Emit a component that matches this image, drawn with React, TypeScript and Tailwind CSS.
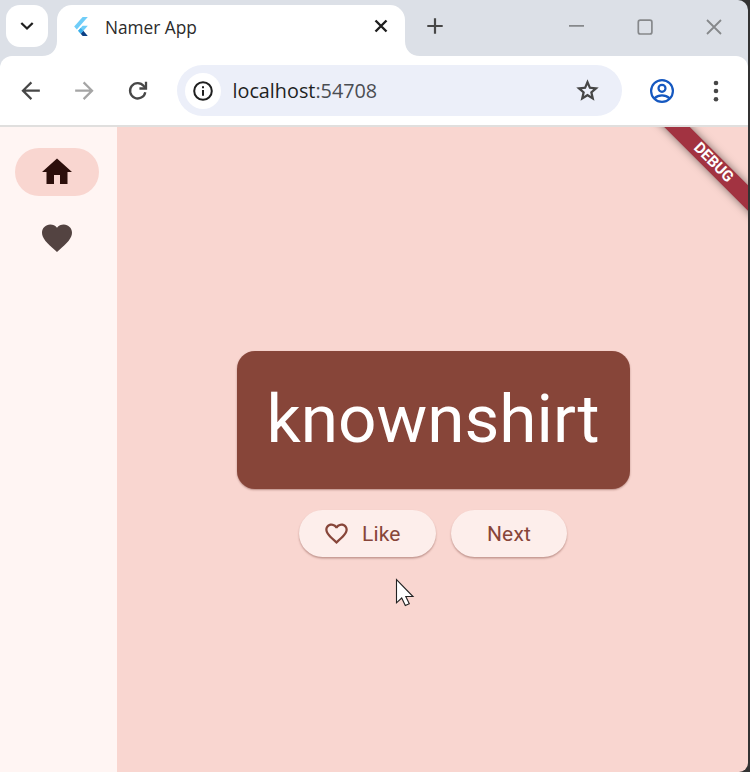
import type { ReactNode } from "react";

const SEGOE = "font-['Open_Sans','Noto_Sans',sans-serif]";

function Icon({ size, className = "", children }: { size: number; className?: string; children: ReactNode }) {
  return (
    <svg width={size} height={size} viewBox="0 0 24 24" fill="currentColor" className={`block shrink-0 ${className}`}>
      {children}
    </svg>
  );
}

function FlutterLogo() {
  return (
    <svg width="14" height="19" viewBox="2 0 20 24" preserveAspectRatio="none" className="block shrink-0">
      <path d="M14.3 0 2.3 12 6 15.7 21.7 0z" fill="#6fcdf8" />
      <path d="M14.3 11.1 7.9 17.5l3.7 3.7 10.1-10.1z" fill="#6fcdf8" />
      <path d="M11.6 21.2 14.3 24h7.4l-6.4-6.5z" fill="#0b3f84" />
      <path d="m7.9 17.5 3.7-3.7 3.7 3.7-3.7 3.7z" fill="#3aaeea" />
    </svg>
  );
}

function TabStrip() {
  return (
    <div className="flex h-[56px] items-start bg-[#dce0e7]">
      <div className="ml-[6px] mt-[5px] flex h-[42px] w-[42px] items-center justify-center rounded-[14px] bg-white">
        <svg width="14" height="10" viewBox="0 0 14 10" className="block" fill="none" stroke="#1f1f1f" strokeWidth="2.3">
          <path d="M1.3 2 7 7.5 12.7 2" />
        </svg>
      </div>
      <svg width="15" height="15" viewBox="0 0 15 15" className="-ml-[6px] mt-[41px] block shrink-0">
        <path d="M15 0v15H0C9 15 15 9 15 0z" fill="#fff" />
      </svg>
      <div className="mt-[5px] flex h-[51px] w-[348px] shrink-0 items-start rounded-t-[15px] bg-white">
        <div className="ml-[17px] mt-[12px]">
          <FlutterLogo />
        </div>
        <span className={`${SEGOE} ml-[17px] mt-[10px] w-[120px] whitespace-nowrap text-[17.3px] leading-[26px] text-[#2b2b2b]`}>
          Namer App
        </span>
        <svg width="14" height="14" viewBox="0 0 14 14" className="ml-auto mr-[17px] mt-[14px] block" stroke="#1f1f1f" strokeWidth="2.4">
          <path d="m1.5 1.5 11 11m0-11-11 11" />
        </svg>
      </div>
      <svg width="15" height="15" viewBox="0 0 15 15" className="mt-[41px] block shrink-0">
        <path d="M0 0v15h15C6 15 0 9 0 0z" fill="#fff" />
      </svg>
      <svg width="16" height="16" viewBox="0 0 16 16" className="ml-[7px] mt-[18px] block" stroke="#474747" strokeWidth="2.2">
        <path d="M8 .3v15.4M.3 8h15.4" />
      </svg>
      <div className="ml-auto mr-[26px] mt-[19px] flex text-[#86888b]">
        <svg width="16" height="16" viewBox="0 0 16 16" className="mr-[52px] block" stroke="currentColor" strokeWidth="1.8">
          <path d="M0 6.8h15" />
        </svg>
        <svg width="16" height="16" viewBox="0 0 16 16" className="mr-[53px] block" stroke="currentColor" strokeWidth="1.7" fill="none">
          <rect x="1.3" y="1.2" width="13.6" height="13.8" rx="2" />
        </svg>
        <svg width="16" height="16" viewBox="0 0 16 16" className="block" stroke="currentColor" strokeWidth="1.8">
          <path d="m1 1 14 14M15 1 1 15" />
        </svg>
      </div>
    </div>
  );
}

function Toolbar() {
  return (
    <div className="bg-[#dce0e7]">
      <div className="flex h-[69px] items-center rounded-t-[12px] bg-white">
        <Icon size={27} className="ml-[16.5px] text-[#474747]">
          <path d="M20.2 11H7.6l5.8-5.7L12 3.8 3.8 12l8.2 8.2 1.4-1.5L7.6 13h12.6z" transform="translate(.1 .2)" />
        </Icon>
        <Icon size={27} className="ml-[27px] text-[#a5a5a5]">
          <path d="M3.8 11h12.6l-5.8-5.7L12 3.8l8.2 8.2-8.2 8.2-1.4-1.5 5.8-5.7H3.8z" transform="translate(-.1 .2)" />
        </Icon>
        <svg width="20" height="20" viewBox="0 0 20 20" className="ml-[30.5px] block shrink-0" fill="none" stroke="#474747" strokeWidth="2.3">
          <path d="M17.3 11.2A7.7 7.7 0 1 1 15.8 5L17.5 7" />
          <path d="M18 .8v6.7h-6.6" />
        </svg>
        <div className="ml-[29px] flex h-[51px] w-[445px] shrink-0 items-center rounded-full bg-[#eceff9] pl-[8px]">
          <div className="flex h-[36px] w-[36px] items-center justify-center rounded-full bg-white">
            <svg width="20" height="20" viewBox="0 0 20 20" className="block">
              <circle cx="10" cy="10" r="8.8" fill="none" stroke="#1f1f1f" strokeWidth="2" />
              <path d="M9 5.3h2v2H9zm0 3.8h2v5.6H9z" fill="#1f1f1f" />
            </svg>
          </div>
          <span className={`${SEGOE} mt-[1px] ml-[11.5px] whitespace-nowrap text-[19.8px] leading-[28px] text-[#1f1f1f]`}>
            localhost<span className="text-[#4a4d52]">:54708</span>
          </span>
          <Icon size={27} className="ml-auto mr-[21.5px] text-[#474747]">
            <path d="m8.85 16.825 3.15-1.9 3.15 1.925-.825-3.6 2.775-2.4-3.65-.325-1.45-3.4-1.45 3.375-3.65.325 2.775 2.425zM5.825 21l1.625-7.025L2 9.25l7.2-.625L12 2l2.8 6.625 7.2.625-5.45 4.725L18.175 21 12 17.275z" />
          </Icon>
        </div>
        <svg width="26" height="26" viewBox="0 0 26 26" className="ml-[27px] block shrink-0" fill="none" stroke="#1558c0" strokeWidth="2.2">
          <circle cx="13" cy="13" r="10.9" />
          <circle cx="13" cy="10.3" r="3.5" />
          <path d="M5.4 20.4c4.2-4 11-4 15.2 0" />
        </svg>
        <svg width="6" height="22" viewBox="0 0 6 22" className="ml-[38px] block shrink-0" fill="#474747">
          <circle cx="3" cy="3" r="2.3" />
          <circle cx="3" cy="11" r="2.3" />
          <circle cx="3" cy="19.3" r="2.3" />
        </svg>
      </div>
      <div className="h-[2px] bg-[#e0dfde]" />
    </div>
  );
}

const HEART = "M12 21.35l-1.45-1.32C5.4 15.36 2 12.28 2 8.5 2 5.42 4.42 3 7.5 3c1.74 0 3.41.81 4.5 2.09C13.09 3.81 14.76 3 16.5 3 19.58 3 22 5.42 22 8.5c0 3.78-3.4 6.86-8.55 11.54z";

function NavigationRail() {
  return (
    <div className="flex w-[117px] shrink-0 flex-col items-center bg-[#fff5f3] pr-[3px] pt-[21px]">
      <div className="flex h-[48px] w-[84px] items-center justify-center rounded-full bg-[#f9d6d0]">
        <Icon size={36} className="text-[#2c0f0b]">
          <path d="M10 20v-6h4v6h5v-8h3L12 3 2 12h3v8z" />
        </Icon>
      </div>
      <Icon size={36} className="mt-[24px] text-[#534341]">
        <path d={HEART} />
      </Icon>
    </div>
  );
}

function DebugBanner() {
  return (
    <div className="absolute right-0 top-0 h-[110px] w-[110px] overflow-hidden">
      <div className="absolute left-[-5px] top-[26.5px] flex h-[18px] w-[160px] rotate-45 items-center justify-center bg-[#a23341] font-[Roboto,sans-serif] text-[15.3px] font-bold leading-none text-white shadow-[0_0_9px_rgba(0,0,0,0.5)]">
        DEBUG
      </div>
    </div>
  );
}

function GeneratorPage() {
  return (
    <div className="relative flex grow flex-col items-center bg-[#f9d6d0] pl-[1px] pt-[223.5px] font-[Roboto,sans-serif]">
      <div className="flex h-[138px] w-[393px] items-center justify-center rounded-[18px] bg-[#874539] pb-[1px] text-[67.5px] leading-none text-white shadow-[0_1px_2px_rgba(90,30,20,0.4)]">
        knownshirt
      </div>
      <div className="mt-[21px] flex gap-[15px] text-[21px] tracking-[0.15px] text-[#874539]">
        <div className="flex h-[47.5px] w-[137px] items-center rounded-full bg-[#fdeeeb] pl-[24px] shadow-[0_1.5px_2px_rgba(90,30,20,0.35)]">
          <Icon size={27}>
            <path d="M16.5 3c-1.74 0-3.41.81-4.5 2.09C10.91 3.81 9.24 3 7.5 3 4.42 3 2 5.42 2 8.5c0 3.78 3.4 6.86 8.55 11.54L12 21.35l1.45-1.32C18.6 15.36 22 12.28 22 8.5 22 5.42 19.58 3 16.5 3zm-4.4 15.55l-.1.1-.1-.1C7.14 14.24 4 11.39 4 8.5 4 6.5 5.5 5 7.5 5c1.54 0 3.04.99 3.57 2.36h1.87C13.46 5.99 14.96 5 16.5 5c2 0 3.5 1.5 3.5 3.5 0 2.89-3.14 5.74-7.9 10.05z" />
          </Icon>
          <span className="ml-[12px] pt-[2px]">Like</span>
        </div>
        <div className="flex h-[47.5px] w-[116px] items-center justify-center rounded-full bg-[#fdeeeb] pt-[2px] shadow-[0_1.5px_2px_rgba(90,30,20,0.35)]">
          Next
        </div>
      </div>
      <DebugBanner />
      <svg width="20" height="30" viewBox="0 0 20 30" className="absolute left-[278px] top-[451px]">
        <path d="M1.5 1.5v23.3l5.2-4.8 3.6 7.6 4-1.8-3.5-7.3h7.2z" fill="#fff" stroke="#222" strokeWidth="1.1" />
      </svg>
    </div>
  );
}

export default function App() {
  return (
    <div className="h-[772px] w-[750px] overflow-hidden bg-[#333333] pr-[2px]">
      <div className="flex h-full w-[748px] flex-col overflow-hidden rounded-br-[9px] rounded-tr-[10px]">
        <TabStrip />
        <Toolbar />
        <div className="flex grow">
          <NavigationRail />
          <GeneratorPage />
        </div>
      </div>
    </div>
  );
}
